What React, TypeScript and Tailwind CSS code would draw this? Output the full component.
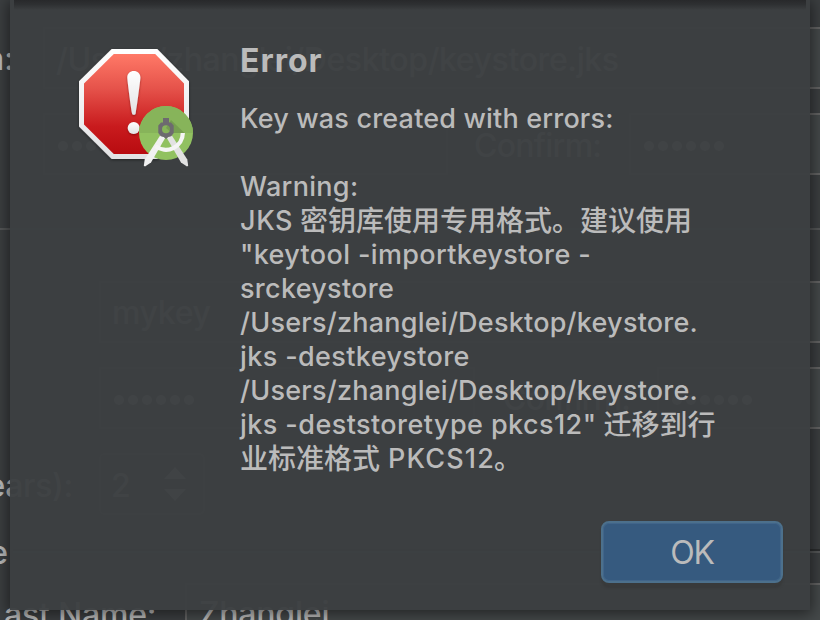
import type { ReactNode } from "react";

function Dots() {
  return (
    <div className="mt-1 flex gap-1 pl-[13px]">
      {[0, 1, 2, 3, 4, 5].map((i) => (
        <span key={i} className="size-2.5 rounded-full bg-[#bbbbbb]" />
      ))}
    </div>
  );
}

function Field({ className, children }: { className: string; children?: ReactNode }) {
  return (
    <div className={`flex h-[62px] shrink-0 items-center border-2 border-[#646464] bg-[#45494a] ${className}`}>
      {children}
    </div>
  );
}

function KeyStoreForm() {
  return (
    <div className="flex w-[1100px] flex-col pt-[27px] text-[32px] leading-[62px] font-medium whitespace-pre text-[#bbbbbb]">
      <div className="flex h-[62px]">
        <div className="flex w-[43px] justify-end pt-px pr-[29px]">n:</div>
        <Field className="w-[960px] pt-1 pl-[11px] tracking-[-0.4px]">/Users/zhanglei/Desktop/keystore.jks</Field>
      </div>
      <div className="mt-6 flex h-[62px] pl-[43px]">
        <Field className="w-[405px]">
          <Dots />
        </Field>
        <div className="w-[181px] pt-[2px] pl-[26px] tracking-[-0.75px]">Confirm:</div>
        <Field className="w-[374px]">
          <Dots />
        </Field>
      </div>
      <div className="mt-[53px] h-0.5 bg-[#555758]" />
      <div className="mt-[51px] flex pl-[99px]">
        <Field className="w-[904px] pt-0.5 pl-[11px] tracking-[-0.3px]">mykey</Field>
      </div>
      <div className="mt-6 flex h-[62px] pl-[99px]">
        <Field className="w-[376px]">
          <Dots />
        </Field>
        <div className="w-[182px] pt-px pl-7 tracking-[-0.75px]">Confirm:</div>
        <Field className="w-[346px]">
          <Dots />
        </Field>
      </div>
      <div className="mt-6 flex h-[62px]">
        <div className="flex w-[99px] justify-end pt-0.5 pr-[26px] tracking-[-0.3px]">ears):</div>
        <div className="flex w-[106px] overflow-hidden rounded-md border-2 border-[#646464]">
          <div className="w-[47px] bg-[#45494a] pt-px pl-[10px] leading-[60px]">2</div>
          <div className="flex flex-1 items-center justify-center border-l border-[#4c5052] pr-0.5">
            <svg width="22" height="34" viewBox="0 0 22 34" fill="#bbbbbb">
              <path d="M11 0 22 12H0Z" />
              <path d="M11 34 0 22H22Z" />
            </svg>
          </div>
        </div>
      </div>
      <div className="mt-1 flex h-[62px] items-center">
        <div className="flex w-[13px] justify-end pt-[5px] pr-[5px]">e</div>
        <div className="mt-0.5 h-1 flex-1 border-t-2 border-b-2 border-t-[#2c2e2f] border-b-[#555758]" />
      </div>
      <div className="mt-0.5 flex h-[62px]">
        <div className="w-[185px] pt-px pl-1 tracking-[-0.2px]">ast Name:</div>
        <Field className="w-[818px] pl-3 tracking-[-0.2px]">Zhanglei</Field>
      </div>
    </div>
  );
}

function ErrorIcon() {
  return (
    <svg className="h-[130px] w-[130px] shrink-0 overflow-visible" viewBox="70 42 130 130">
      <defs>
        <linearGradient id="red" x1="0" y1="0" x2="0" y2="1">
          <stop offset="0" stopColor="#ff7967" />
          <stop offset="0.35" stopColor="#e5524a" />
          <stop offset="0.72" stopColor="#c91b1e" />
          <stop offset="1" stopColor="#b80b10" />
        </linearGradient>
        <linearGradient id="rim" x1="0" y1="0" x2="0" y2="1">
          <stop offset="0" stopColor="#ffffff" />
          <stop offset="1" stopColor="#e2e2e4" />
        </linearGradient>
        <filter id="drop" x="-20%" y="-20%" width="140%" height="140%">
          <feDropShadow dx="0" dy="1" stdDeviation="1.5" floodColor="#000" floodOpacity="0.45" />
        </filter>
        <filter id="soft" x="-50%" y="-20%" width="200%" height="140%">
          <feDropShadow dx="0" dy="1" stdDeviation="0.8" floodColor="#600" floodOpacity="0.6" />
        </filter>
      </defs>
      <path d="M111.7 49H157.3L189 81.3V126.5L157.3 159H111.7L79 126.5V81.3Z" fill="url(#rim)" filter="url(#drop)" />
      <path d="M113.8 54H155.2L184 83.4V124.4L155.2 154H113.8L84 124.4V83.4Z" fill="url(#red)" />
      <g fill="url(#rim)" filter="url(#soft)">
        <path d="M127.3 77.5C127.3 73.6 130.2 71 133.8 71S140.4 73.6 140.4 77.5C140.4 80 137.3 104 135.7 113.3C135.4 115.3 132.3 115.3 132 113.3C130.4 104 127.3 80 127.3 77.5Z" />
        <circle cx="133.7" cy="128" r="6" />
      </g>
      <circle cx="166" cy="133" r="27" fill="#91c160" />
      <path d="M139 133A27 27 0 0 1 193 133Z" fill="#87b45a" />
      <path d="M171 120 184.5 133H172L166 128Z" fill="#769e50" />
      <g fill="#f1f1f1">
        <path d="M160.3 135.2 165.3 137.8 151 162.6 145 166.5 143.8 165.7 144.7 159.5Z" />
        <path d="M171.7 135.2 166.7 137.8 181 162.6 187 166.5 188.2 165.7 187.3 159.5Z" fill="#e2e2e2" />
      </g>
      <path d="M182.8 133A16.8 16.8 0 0 1 155.5 146.1" fill="none" stroke="#f5f5f5" strokeWidth="4.3" />
      <path
        fillRule="evenodd"
        fill="#6d6a6f"
        d="M163 118H169V122.6H171L173.7 125.5V133L171.2 136.3 168.2 137 166 139 163.8 137 160.8 136.3 158.3 133V125.5L161 122.6H163ZM166 125.3A4 4 0 1 0 166 133.3A4 4 0 1 0 166 125.3Z"
      />
    </svg>
  );
}

function Han({ className, children }: { className: string; children: ReactNode }) {
  return (
    <span
      className={`align-[-1px] font-['Noto_Sans_CJK_SC',sans-serif] text-[28px] leading-[0] tracking-normal ${className}`}
    >
      {children}
    </span>
  );
}

function Line({ className = "", children }: { className?: string; children?: ReactNode }) {
  return <p className={`h-[34px] ${className}`}>{children}</p>;
}

export default function App() {
  return (
    <div className="relative h-[620px] w-[820px] overflow-hidden bg-[#3c3f41] font-['Inter','Noto_Sans_CJK_SC',sans-serif]">
      <KeyStoreForm />
      <div
        role="alertdialog"
        className="absolute top-0 left-[10px] h-[610px] w-[800px] bg-[#3c3f41]/97 shadow-[0_2px_14px_2px_rgba(0,0,0,0.5)]"
      >
        <div className="mx-1 h-[10px] bg-linear-to-b from-[#28292b] via-[#2e3032] via-45% to-transparent" />
        <div className="flex gap-10 pt-[30px] pl-[60px]">
          <div className="pt-0.5">
            <ErrorIcon />
          </div>
          <div className="pt-px whitespace-pre text-[#bbbbbb]">
            <h1 className="h-10 text-[32px] leading-10 font-bold tracking-[1px]">Error</h1>
            <div className="mt-[21px] text-[27px] leading-[34px] font-medium">
              <Line className="tracking-[0.18px]">Key was created with errors:</Line>
              <Line />
              <Line className="tracking-[0.3px]">Warning:</Line>
              <Line className="tracking-[0.6px]">
                JKS<Han className="ml-[7px]">密钥库使用专用格式。建议使用</Han>
              </Line>
              <Line className="tracking-[0.36px]">"keytool -importkeystore -</Line>
              <Line className="tracking-[0.28px]">srckeystore</Line>
              <Line className="tracking-[0.23px]">/Users/zhanglei/Desktop/keystore.</Line>
              <Line className="tracking-[0.38px]">jks -destkeystore</Line>
              <Line className="tracking-[0.23px]">/Users/zhanglei/Desktop/keystore.</Line>
              <Line className="tracking-[0.43px]">
                jks -deststoretype pkcs12"<Han className="ml-[7px]">迁移到行</Han>
              </Line>
              <Line className="tracking-[1.15px]">
                <Han className="mr-2">业标准格式</Han>PKCS12<Han className="-ml-px">。</Han>
              </Line>
            </div>
          </div>
        </div>
        <div className="flex justify-end pt-[45px] pr-[27px]">
          <button className="h-[62px] w-[182px] rounded-lg border-2 border-[#4c708c] bg-[#365a7f] pt-0.5 text-[32px] font-normal tracking-[-1.2px] text-[#bbbbbb] shadow-[0_5px_2px_0_#383a3b,inset_0_0_0_1px_#41658a]">
            OK
          </button>
        </div>
      </div>
    </div>
  );
}
